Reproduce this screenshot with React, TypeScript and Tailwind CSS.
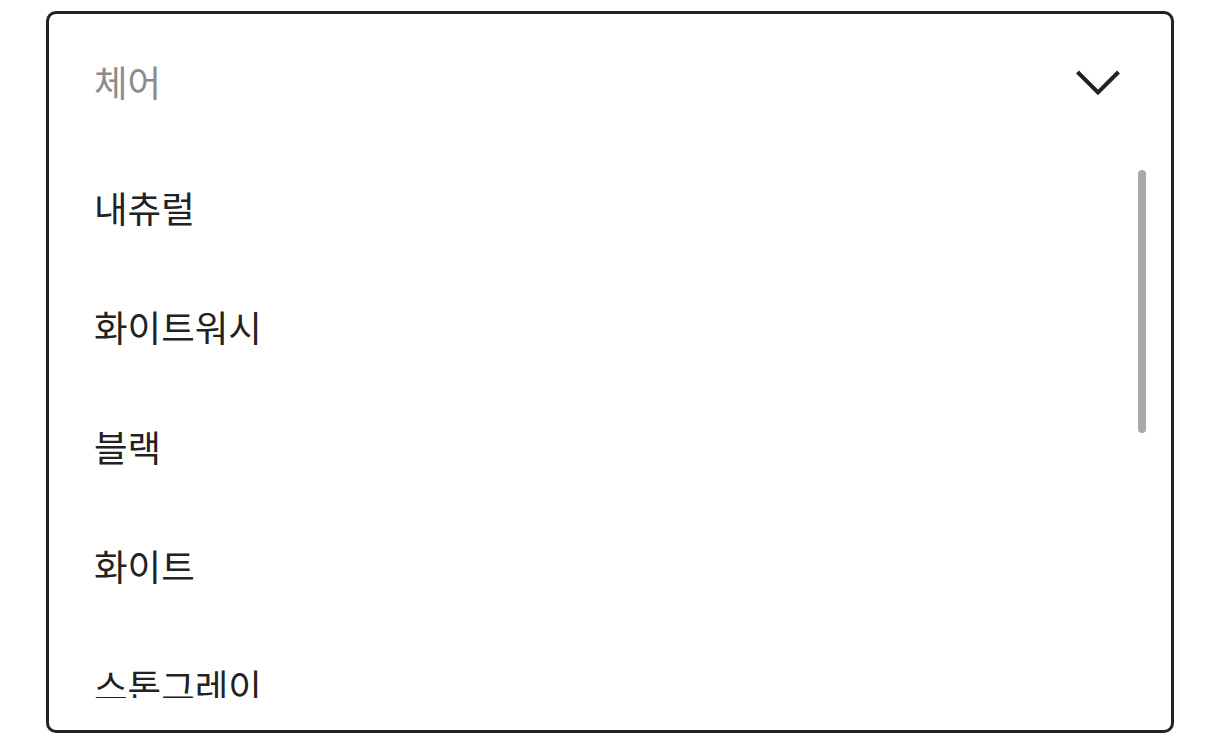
import React from "react";

const items = ["내츄럴", "화이트워시", "블랙", "화이트", "스톤그레이"];

export default function App() {
  return (
    <div className="w-[1222px] h-[750px] bg-white pt-[11px] pl-[46px]" style={{ fontFamily: '"Noto Sans CJK KR", "Noto Sans", sans-serif' }}>
      <div className="w-[1128px] h-[722px] border-[3px] border-[#222222] rounded-[10px] flex flex-col overflow-hidden">
        <div className="h-[134px] shrink-0 flex items-center justify-between pl-[45px] pr-[50px] pt-[3px]">
          <span className="text-[36.5px] text-[#8c8c8c] leading-none">체어</span>
          <svg width="46" height="28" viewBox="0 0 46 28" fill="none">
            <path d="M2.5 3 L23 23.5 L43.5 3" stroke="#222222" strokeWidth="4" strokeLinecap="butt" strokeLinejoin="miter" />
          </svg>
        </div>
        <div className="relative h-[550px] shrink-0 overflow-hidden">
          <div className="flex flex-col">
            {items.map((t) => (
              <div key={t} className="h-[119.5px] shrink-0 flex items-center pl-[45px]">
                <span className="text-[36.5px] text-[#222222] leading-none">{t}</span>
              </div>
            ))}
          </div>
          <div className="absolute right-[25px] top-[22px] w-[8px] h-[263px] rounded-full bg-[#a8a8a8]" />
        </div>
      </div>
    </div>
  );
}
